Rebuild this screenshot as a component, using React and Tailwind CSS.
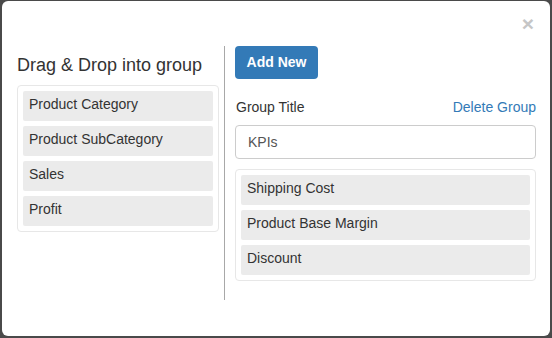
import React from "react";

const Item = ({ children }) => (
  <div className="h-[30px] bg-[#ebebeb] rounded-[2px] pl-[6px] pt-[3px] text-[14px] leading-[20px] text-[#333]">
    {children}
  </div>
);

export default function App() {
  const font = { fontFamily: '"Liberation Sans", Arial, Helvetica, sans-serif' };
  return (
    <div className="w-[552px] h-[338px] bg-[#4a4a4a] pt-px pl-[2px] pr-[2px] pb-[2px]" style={font}>
      <div className="w-full h-full bg-white rounded-[6px] flex flex-col">
        <div className="h-[45px] flex justify-end pr-[16px] pt-[12px]">
          <span className="text-[21px] leading-none font-bold text-[#c6c6c6]">×</span>
        </div>
        <div className="flex">
          <div className="w-[202px] ml-[15px]">
            <div className="mt-[9px] mb-[10px] text-[18px] leading-[20px] text-[#333]">
              Drag &amp; Drop into group
            </div>
            <div className="border border-[#e7e7e7] rounded-[4px] p-[5px] flex flex-col gap-[5px]">
              <Item>Product Category</Item>
              <Item>Product SubCategory</Item>
              <Item>Sales</Item>
              <Item>Profit</Item>
            </div>
          </div>
          <div className="w-px h-[254px] bg-[#a8a8a8] ml-[5px]" />
          <div className="w-[301px] ml-[10px]">
            <button className="h-[33px] w-[83px] bg-[#337ab7] rounded-[4px] text-white text-[14px] font-bold">
              Add New
            </button>
            <div className="mt-[18px] mb-[8px] flex justify-between text-[14px] leading-[20px]">
              <span className="text-[#333] pl-px">Group Title</span>
              <span className="text-[#337ab7]">Delete Group</span>
            </div>
            <div className="h-[34px] border border-[#cccccc] rounded-[4px] px-[12px] flex items-center text-[14px] text-[#555]">
              KPIs
            </div>
            <div className="mt-[10px] border border-[#e7e7e7] rounded-[4px] p-[5px] flex flex-col gap-[5px]">
              <Item>Shipping Cost</Item>
              <Item>Product Base Margin</Item>
              <Item>Discount</Item>
            </div>
          </div>
        </div>
      </div>
    </div>
  );
}
